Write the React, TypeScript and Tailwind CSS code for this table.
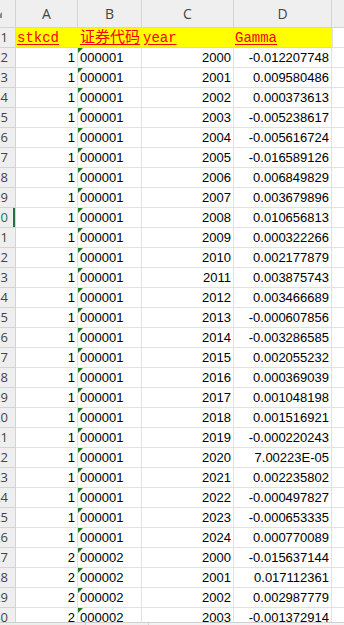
import React from "react";

const gammas: [number, string, number, string][] = [
  [1, "000001", 2000, "-0.012207748"],
  [1, "000001", 2001, "0.009580486"],
  [1, "000001", 2002, "0.000373613"],
  [1, "000001", 2003, "-0.005238617"],
  [1, "000001", 2004, "-0.005616724"],
  [1, "000001", 2005, "-0.016589126"],
  [1, "000001", 2006, "0.006849829"],
  [1, "000001", 2007, "0.003679896"],
  [1, "000001", 2008, "0.010656813"],
  [1, "000001", 2009, "0.000322266"],
  [1, "000001", 2010, "0.002177879"],
  [1, "000001", 2011, "0.003875743"],
  [1, "000001", 2012, "0.003466689"],
  [1, "000001", 2013, "-0.000607856"],
  [1, "000001", 2014, "-0.003286585"],
  [1, "000001", 2015, "0.002055232"],
  [1, "000001", 2016, "0.000369039"],
  [1, "000001", 2017, "0.001048198"],
  [1, "000001", 2018, "0.001516921"],
  [1, "000001", 2019, "-0.000220243"],
  [1, "000001", 2020, "7.00223E-05"],
  [1, "000001", 2021, "0.002235802"],
  [1, "000001", 2022, "-0.000497827"],
  [1, "000001", 2023, "-0.000653335"],
  [1, "000001", 2024, "0.000770089"],
  [2, "000002", 2000, "-0.015637144"],
  [2, "000002", 2001, "0.017112361"],
  [2, "000002", 2002, "0.002987779"],
  [2, "000002", 2003, "-0.001372914"],
];

const hdrFont = { fontFamily: '"Open Sans", "Noto Sans", sans-serif' };
const cellFont = { fontFamily: '"Liberation Sans", Arial, sans-serif' };
const monoFont = { fontFamily: '"Liberation Mono", "Noto Sans CJK SC", monospace' };

function RowHeader({ n, selected }: { n: number; selected?: boolean }) {
  return (
    <div className="relative w-[16px] shrink-0 h-full overflow-hidden border-r border-b border-[#d4d4d4] bg-[#efefef] flex justify-end">
      <div
        className={`w-[30px] shrink-0 text-right pr-[7px] text-[13px] leading-[19px] ${
          selected ? "text-[#1e7145]" : "text-[#444444]"
        }`}
        style={hdrFont}
      >
        {n}
      </div>
      {selected && <div className="absolute right-0 top-0 bottom-0 w-[2px] bg-[#217346]" />}
    </div>
  );
}

export default function App() {
  return (
    <div className="w-[344px] h-[625px] overflow-hidden bg-white relative">
      {/* column headers */}
      <div className="flex h-[28px] bg-[#efefef]">
        <div className="relative w-[16px] shrink-0 h-full border-r border-b border-[#d4d4d4] overflow-hidden">
          <div className="absolute left-[-4px] top-[12px] w-0 h-0 border-l-[6px] border-l-transparent border-b-[6px] border-b-[#8a8a8a]" />
        </div>
        {[
          ["A", "w-[62px]"],
          ["B", "w-[64px]"],
          ["C", "w-[92px]"],
          ["D", "w-[98px]"],
        ].map(([l, w]) => (
          <div
            key={l}
            className={`${w} shrink-0 h-full border-r border-b border-[#d4d4d4] flex items-center justify-center text-[14px] text-[#444444]`}
            style={hdrFont}
          >
            {l}
          </div>
        ))}
        <div className="flex-1 h-full border-b border-[#d4d4d4]" />
      </div>

      {/* header row */}
      <div className="flex h-[20px]">
        <RowHeader n={1} />
        <div
          className="w-[316px] shrink-0 h-full bg-[#ffff00] border-b border-[#d4d4d4] flex items-end text-[#ff0000] text-[14px] leading-[18px]"
          style={monoFont}
        >
          <div className="w-[62px] shrink-0 pl-[1px] whitespace-nowrap">
            <span className="underline decoration-[#ff0000] underline-offset-[2px]">stkcd</span>
          </div>
          <div className="w-[64px] shrink-0 pl-[2px] whitespace-nowrap">
            <span
              className="underline decoration-[#ff0000] underline-offset-[2px] text-[15px]"
              style={{ fontFamily: '"Noto Sans CJK SC", sans-serif' }}
            >
              证券代码
            </span>
          </div>
          <div className="w-[92px] shrink-0 pl-[1px] whitespace-nowrap">
            <span className="underline decoration-[#ff0000] underline-offset-[2px]">year</span>
          </div>
          <div className="w-[98px] shrink-0 pl-[1px] whitespace-nowrap">
            <span className="underline decoration-[#ff0000] underline-offset-[2px]">Gamma</span>
          </div>
        </div>
        <div className="flex-1 h-full border-b border-l border-[#e1e1e1]" />
      </div>

      {/* data rows */}
      {gammas.map(([id, code, year, g], i) => {
        const n = i + 2;
        return (
          <div key={n} className="flex h-[20px] text-[13px] text-black" style={cellFont}>
            <RowHeader n={n} selected={n === 10} />
            <div className="w-[62px] shrink-0 h-full border-r border-b border-[#e1e1e1] text-right pr-[2px] leading-[20px]">
              {id}
            </div>
            <div className="relative w-[64px] shrink-0 h-full border-r border-b border-[#e1e1e1] pl-[2px] leading-[20px]">
              <div className="absolute left-0 top-0 w-0 h-0 border-t-[5px] border-t-[#1b7a1b] border-r-[5px] border-r-transparent" />
              {code}
            </div>
            <div className="w-[92px] shrink-0 h-full border-r border-b border-[#e1e1e1] text-right pr-[2px] leading-[20px]">
              {year}
            </div>
            <div className="w-[98px] shrink-0 h-full border-r border-b border-[#e1e1e1] text-right pr-[2px] leading-[20px]">
              {g}
            </div>
            <div className="flex-1 h-full border-b border-[#e1e1e1]" />
          </div>
        );
      })}

      {/* bottom tab bar strip */}
      <div className="absolute left-0 right-0 top-[622px] h-[3px] flex border-t border-[#d0d0d0]">
        <div className="w-[85px] h-full bg-[#e9efe9]" />
        <div className="w-[63px] h-full bg-[#f0f0f0] border-l border-[#d0d0d0]" />
        <div className="flex-1 h-full bg-[#f3f3f3] border-l border-[#d0d0d0]" />
      </div>
    </div>
  );
}
